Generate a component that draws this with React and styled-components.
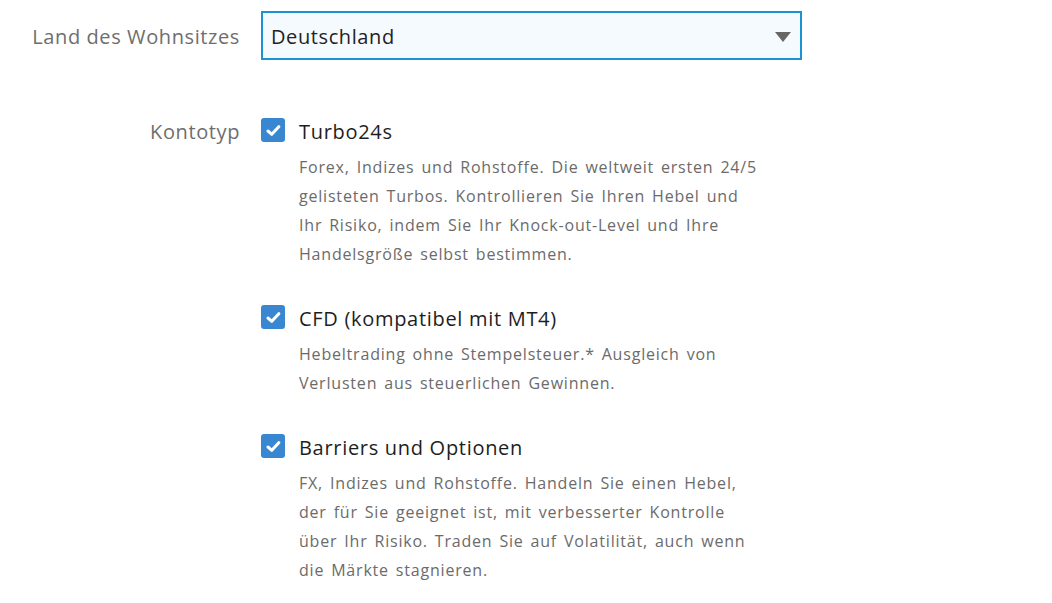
import React from "react";
import styled, { createGlobalStyle } from "styled-components";

const GlobalStyle = createGlobalStyle`
  body {
    margin: 0;
    background: #fff;
    font-family: "Open Sans", "Noto Sans", sans-serif;
  }
`;

const Form = styled.div`
  display: grid;
  grid-template-columns: 240px 541px;
  column-gap: 21px;
  row-gap: 55px;
  padding-top: 11px;
`;

const Label = styled.div`
  text-align: right;
  font-size: 20px;
  letter-spacing: 0.6px;
  color: #6e6e6e;
  line-height: ${(p) => p.lineHeight || "29px"};
`;

const Select = styled.div`
  height: 49px;
  box-sizing: border-box;
  border: 2px solid #1a93d2;
  background: #f5faff;
  display: flex;
  align-items: center;
  justify-content: space-between;
  padding: 2px 9px 0 8px;
  font-size: 20px;
  letter-spacing: 0.6px;
  color: #222;
`;

const Arrow = styled.span`
  width: 0;
  height: 0;
  border-left: 8px solid transparent;
  border-right: 8px solid transparent;
  border-top: 10px solid #666;
`;

const Options = styled.div`
  display: flex;
  flex-direction: column;
  gap: 35px;
`;

const Option = styled.div`
  display: grid;
  grid-template-columns: 24px 1fr;
  column-gap: 14px;
  row-gap: 7px;
`;

const Box = styled.span`
  width: 24px;
  height: 24px;
  border-radius: 3px;
  background: #3a87d1;
  display: flex;
  align-items: center;
  justify-content: center;
  margin-top: 1px;
`;

const Title = styled.div`
  font-size: 20px;
  font-weight: 500;
  letter-spacing: 0.7px;
  line-height: 29px;
  color: #1e1e1e;
`;

const Desc = styled.div`
  grid-column: 2;
  font-size: 16px;
  letter-spacing: 0.8px;
  word-spacing: 2px;
  line-height: 29px;
  color: #6b6b6b;
`;

const Line = styled.span`
  display: block;
  white-space: nowrap;
`;

const Check = () => (
  <svg width="15" height="13" viewBox="0 0 15 13">
    <path d="M2 7 L5.8 10.3 L12.8 2.7" fill="none" stroke="#fff" strokeWidth="3" strokeLinecap="round" strokeLinejoin="round" />
  </svg>
);

const items = [
  {
    title: "Turbo24s",
    lines: [
      "Forex, Indizes und Rohstoffe. Die weltweit ersten 24/5",
      "gelisteten Turbos. Kontrollieren Sie Ihren Hebel und",
      "Ihr Risiko, indem Sie Ihr Knock-out-Level und Ihre",
      "Handelsgröße selbst bestimmen.",
    ],
  },
  {
    title: "CFD (kompatibel mit MT4)",
    lines: [
      "Hebeltrading ohne Stempelsteuer.* Ausgleich von",
      "Verlusten aus steuerlichen Gewinnen.",
    ],
  },
  {
    title: "Barriers und Optionen",
    lines: [
      "FX, Indizes und Rohstoffe. Handeln Sie einen Hebel,",
      "der für Sie geeignet ist, mit verbesserter Kontrolle",
      "über Ihr Risiko. Traden Sie auf Volatilität, auch wenn",
      "die Märkte stagnieren.",
    ],
  },
];

export default function App() {
  return (
    <>
      <GlobalStyle />
      <Form>
        <Label lineHeight="51px">Land des Wohnsitzes</Label>
        <Select>
          Deutschland
          <Arrow />
        </Select>
        <Label>Kontotyp</Label>
        <Options>
          {items.map((it) => (
            <Option key={it.title}>
              <Box>
                <Check />
              </Box>
              <Title>{it.title}</Title>
              <Desc>
                {it.lines.map((l) => (
                  <Line key={l}>{l}</Line>
                ))}
              </Desc>
            </Option>
          ))}
        </Options>
      </Form>
    </>
  );
}
